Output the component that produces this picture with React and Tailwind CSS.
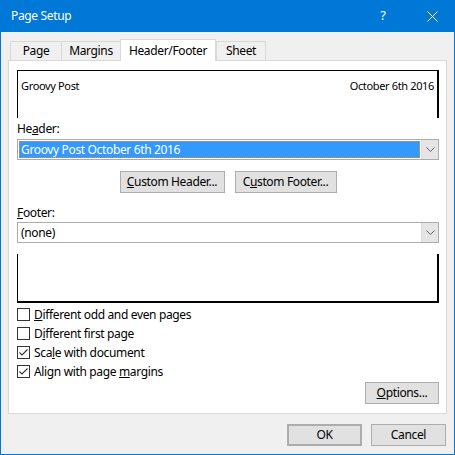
import React from "react";

const font = { fontFamily: '"Noto Sans", "Open Sans", sans-serif' };

const tabs = [
  { label: "Page", w: "w-[51px]" },
  { label: "Margins", w: "w-[59px]" },
  { label: "Header/Footer", w: "w-[96px]", active: true },
  { label: "Sheet", w: "w-[50px]" },
];

const options = [
  { pre: "", key: "D", post: "ifferent odd and even pages", checked: false },
  { pre: "D", key: "i", post: "fferent first page", checked: false },
  { pre: "Sca", key: "l", post: "e with document", checked: true },
  { pre: "Align with page ", key: "m", post: "argins", checked: true },
];

const Chevron = () => (
  <svg width="9" height="5" viewBox="0 0 9 5" className="block">
    <path d="M0.5 0.5 L4.5 4.5 L8.5 0.5" fill="none" stroke="#606060" strokeWidth="1" />
  </svg>
);

const Combo = ({ children, selected }) => (
  <div className="flex h-[21px] border border-[#acacac] bg-white">
    <div className="flex-1 p-[1px]">
      <div
        className={
          selected
            ? "h-full flex items-center px-[2px] bg-[#3399ff] text-white outline-1 outline-dotted outline-[#e08a3c] -outline-offset-1"
            : "h-full flex items-center px-[2px] text-black"
        }
      >
        {children}
      </div>
    </div>
    <div className="w-[17px] flex items-center justify-center bg-[#e5e5e5] border-l border-[#dcdcdc]">
      <Chevron />
    </div>
  </div>
);

const Button = ({ children, className = "" }) => (
  <button
    className={`h-[22px] flex items-center justify-center bg-[#e1e1e1] border border-[#adadad] text-[12px] text-black ${className}`}
  >
    {children}
  </button>
);

const Check = ({ checked }) => (
  <div className="w-[13px] h-[13px] border border-[#333333] bg-white flex items-center justify-center">
    {checked && (
      <svg width="11" height="11" viewBox="0 0 11 11" className="block">
        <path d="M1.5 5.5 L4 8 L9.5 2.5" fill="none" stroke="#333333" strokeWidth="1.1" />
      </svg>
    )}
  </div>
);

export default function App() {
  return (
    <div className="w-[455px] h-[455px] bg-[#0078d7] flex flex-col tracking-[-0.35px]" style={font}>
      <div className="h-[32px] flex items-center pl-[11px] text-white text-[12px] shrink-0">
        <div className="flex-1">Page Setup</div>
        <div className="w-[40px] text-center text-[13px] mr-[6px]">?</div>
        <div className="w-[46px] flex items-center justify-center">
          <svg width="11" height="11" viewBox="0 0 11 11" className="block">
            <path d="M0.5 0.5 L10.5 10.5 M10.5 0.5 L0.5 10.5" stroke="#ffffff" strokeWidth="1" />
          </svg>
        </div>
      </div>

      <div className="flex-1 mx-[1px] mb-[1px] bg-[#f0f0f0] pl-[7px] pr-[7px] pt-[7px] text-[12px] text-black">
        <div className="flex items-end h-[21px] ml-[2px]">
          {tabs.map((t) =>
            t.active ? (
              <div
                key={t.label}
                className={`${t.w} h-[22px] -mb-[1px] relative z-10 bg-white border border-b-0 border-[#d9d9d9] flex items-center justify-center`}
              >
                {t.label}
              </div>
            ) : (
              <div
                key={t.label}
                className={`${t.w} h-[19px] bg-[#f0f0f0] border border-b-0 border-r-0 border-[#d9d9d9] flex items-center justify-center last:border-r`}
              >
                {t.label}
              </div>
            )
          )}
        </div>

        <div className="h-[354px] bg-white border border-[#d9d9d9] pt-[9px] pl-[8px] pr-[7px] flex flex-col">
          <div className="h-[48px] border-t border-l border-r-2 border-black flex justify-between px-[3px] pt-[7px] text-[11px]">
            <span>Groovy Post</span>
            <span>October 6th 2016</span>
          </div>

          <div className="mt-[3px] h-[16px] leading-[16px]">
            He<u>a</u>der:
          </div>
          <div className="mt-[2px]">
            <Combo selected>Groovy Post October 6th 2016</Combo>
          </div>

          <div className="mt-[11px] flex justify-center gap-[10px]">
            <Button className="w-[105px]">
              <u>C</u>ustom Header...
            </Button>
            <Button className="w-[102px]">
              C<u>u</u>stom Footer...
            </Button>
          </div>

          <div className="mt-[12px] h-[16px] leading-[16px]">
            <u>F</u>ooter:
          </div>
          <div className="mt-[1px]">
            <Combo>(none)</Combo>
          </div>

          <div className="mt-[11px] h-[49px] border-l border-r-2 border-b-2 border-black" />

          <div className="mt-[2px] flex flex-col">
            {options.map((o) => (
              <div key={o.post} className="h-[19px] flex items-center gap-[4px]">
                <Check checked={o.checked} />
                <span>
                  {o.pre}
                  <u>{o.key}</u>
                  {o.post}
                </span>
              </div>
            ))}
          </div>

          <div className="mt-[1px] flex justify-end">
            <Button className="w-[74px]">
              <u>O</u>ptions...
            </Button>
          </div>
        </div>

        <div className="mt-[10px] flex justify-end gap-[9px] pr-[1px]">
          <Button className="w-[75px] border-2 border-[#0078d7]">OK</Button>
          <Button className="w-[75px]">Cancel</Button>
        </div>
      </div>
    </div>
  );
}
